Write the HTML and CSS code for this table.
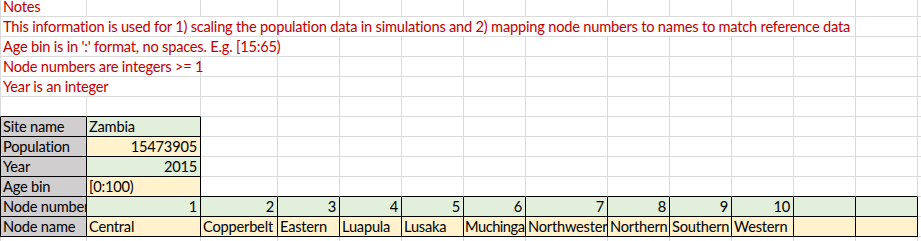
FILE: index.html
```html
<!DOCTYPE html>
<html>
<head>
<meta charset="utf-8">
<link rel="stylesheet" href="styles.css">
</head>
<body>
<div class="sheet">
  <!-- row 1 -->
  <div class="c l red first">Notes</div><div class="c"></div><div class="c"></div><div class="c"></div><div class="c"></div><div class="c"></div><div class="c"></div><div class="c"></div><div class="c"></div><div class="c"></div><div class="c"></div><div class="c"></div><div class="c"></div><div class="c e"></div>
  <!-- row 2 -->
  <div class="c l red s12">This information is used for 1) scaling the population data in simulations and 2) mapping node numbers to names to match reference data</div><div class="c"></div><div class="c e"></div>
  <!-- row 3 -->
  <div class="c l red s3">Age bin is in ':' format, no spaces. E.g. [15:65)</div><div class="c"></div><div class="c"></div><div class="c"></div><div class="c"></div><div class="c"></div><div class="c"></div><div class="c"></div><div class="c"></div><div class="c"></div><div class="c"></div><div class="c e"></div>
  <!-- row 4 -->
  <div class="c l red s2">Node numbers are integers &gt;= 1</div><div class="c"></div><div class="c"></div><div class="c"></div><div class="c"></div><div class="c"></div><div class="c"></div><div class="c"></div><div class="c"></div><div class="c"></div><div class="c"></div><div class="c"></div><div class="c e"></div>
  <!-- row 5 -->
  <div class="c l red s2">Year is an integer</div><div class="c"></div><div class="c"></div><div class="c"></div><div class="c"></div><div class="c"></div><div class="c"></div><div class="c"></div><div class="c"></div><div class="c"></div><div class="c"></div><div class="c"></div><div class="c e"></div>
  <!-- row 6 -->
  <div class="c l tb"></div><div class="c tb"></div><div class="c"></div><div class="c"></div><div class="c"></div><div class="c"></div><div class="c"></div><div class="c"></div><div class="c"></div><div class="c"></div><div class="c"></div><div class="c"></div><div class="c"></div><div class="c e"></div>
  <!-- row 7 -->
  <div class="c l t lab">Site name</div><div class="c t gr">Zambia</div><div class="c"></div><div class="c"></div><div class="c"></div><div class="c"></div><div class="c"></div><div class="c"></div><div class="c"></div><div class="c"></div><div class="c"></div><div class="c"></div><div class="c"></div><div class="c e"></div>
  <!-- row 8 -->
  <div class="c l t lab">Population</div><div class="c t y r">15473905</div><div class="c"></div><div class="c"></div><div class="c"></div><div class="c"></div><div class="c"></div><div class="c"></div><div class="c"></div><div class="c"></div><div class="c"></div><div class="c"></div><div class="c"></div><div class="c e"></div>
  <!-- row 9 -->
  <div class="c l t lab">Year</div><div class="c t gr r">2015</div><div class="c"></div><div class="c"></div><div class="c"></div><div class="c"></div><div class="c"></div><div class="c"></div><div class="c"></div><div class="c"></div><div class="c"></div><div class="c"></div><div class="c"></div><div class="c e"></div>
  <!-- row 10 -->
  <div class="c l t lab">Age bin</div><div class="c t y">[0:100)</div><div class="c tb"></div><div class="c tb"></div><div class="c tb"></div><div class="c tb"></div><div class="c tb"></div><div class="c tb"></div><div class="c tb"></div><div class="c tb"></div><div class="c tb"></div><div class="c tb"></div><div class="c tb"></div><div class="c e"></div>
  <!-- row 11 -->
  <div class="c l t lab">Node number</div><div class="c t gr r">1</div><div class="c t gr r">2</div><div class="c t gr r">3</div><div class="c t gr r">4</div><div class="c t gr r">5</div><div class="c t gr r">6</div><div class="c t gr r">7</div><div class="c t gr r">8</div><div class="c t gr r">9</div><div class="c t gr r">10</div><div class="c t gr"></div><div class="c t gr"></div><div class="c e"></div>
  <!-- row 12 -->
  <div class="c l t lab">Node name</div><div class="c t y">Central</div><div class="c t y">Copperbelt</div><div class="c t y">Eastern</div><div class="c t y">Luapula</div><div class="c t y">Lusaka</div><div class="c t y tight">Muchinga</div><div class="c t y">Northwestern</div><div class="c t y">Northern</div><div class="c t y">Southern</div><div class="c t y">Western</div><div class="c t y"></div><div class="c t y"></div><div class="c e"></div>
  <!-- row 13 -->
  <div class="c l nb"></div><div class="c nb"></div><div class="c nb"></div><div class="c nb"></div><div class="c nb"></div><div class="c nb"></div><div class="c nb"></div><div class="c nb"></div><div class="c nb"></div><div class="c nb"></div><div class="c nb"></div><div class="c nb"></div><div class="c nb"></div><div class="c e nb"></div>
</div>
</body>
</html>
```

FILE: styles.css
```css
html, body {
  margin: 0;
  padding: 0;
  background: #ffffff;
}

.sheet {
  width: 921px;
  height: 241px;
  overflow: hidden;
  display: grid;
  grid-template-columns: 87px 114px 77px 62px 62px 62px 62px 82px 62px 62px 62px 62px 62px 3px;
  grid-template-rows: 17px repeat(11, 20px) 4px;
  font-family: Lato, "Noto Sans", sans-serif;
  font-size: 14.67px;
  letter-spacing: -0.22px;
  color: #000000;
}

.c {
  box-sizing: border-box;
  border-right: 1px solid #dadada;
  border-bottom: 1px solid #dadada;
  display: flex;
  align-items: flex-end;
  padding: 0 2px;
  line-height: 19px;
  white-space: nowrap;
  overflow: hidden;
}

.first {
  line-height: 15px;
  padding-bottom: 2px;
}

.tight {
  letter-spacing: -0.5px;
  padding-left: 1px;
}

.l {
  border-left: 1px solid #dadada;
}

.e {
  border-right: none;
}

.nb {
  border-bottom: none;
}

.red {
  color: #c00000;
  overflow: visible;
}

.s2 { grid-column: span 2; }
.s3 { grid-column: span 3; }
.s12 { grid-column: span 12; }

.r {
  justify-content: flex-end;
  padding-right: 3px;
}

.t {
  border-right-color: #000000;
  border-bottom-color: #000000;
}

.l.t {
  border-left-color: #000000;
}

.tb {
  border-bottom-color: #000000;
}

.lab { background: #d0cece; }
.gr { background: #e2efda; }
.y { background: #fff2cc; }
```
